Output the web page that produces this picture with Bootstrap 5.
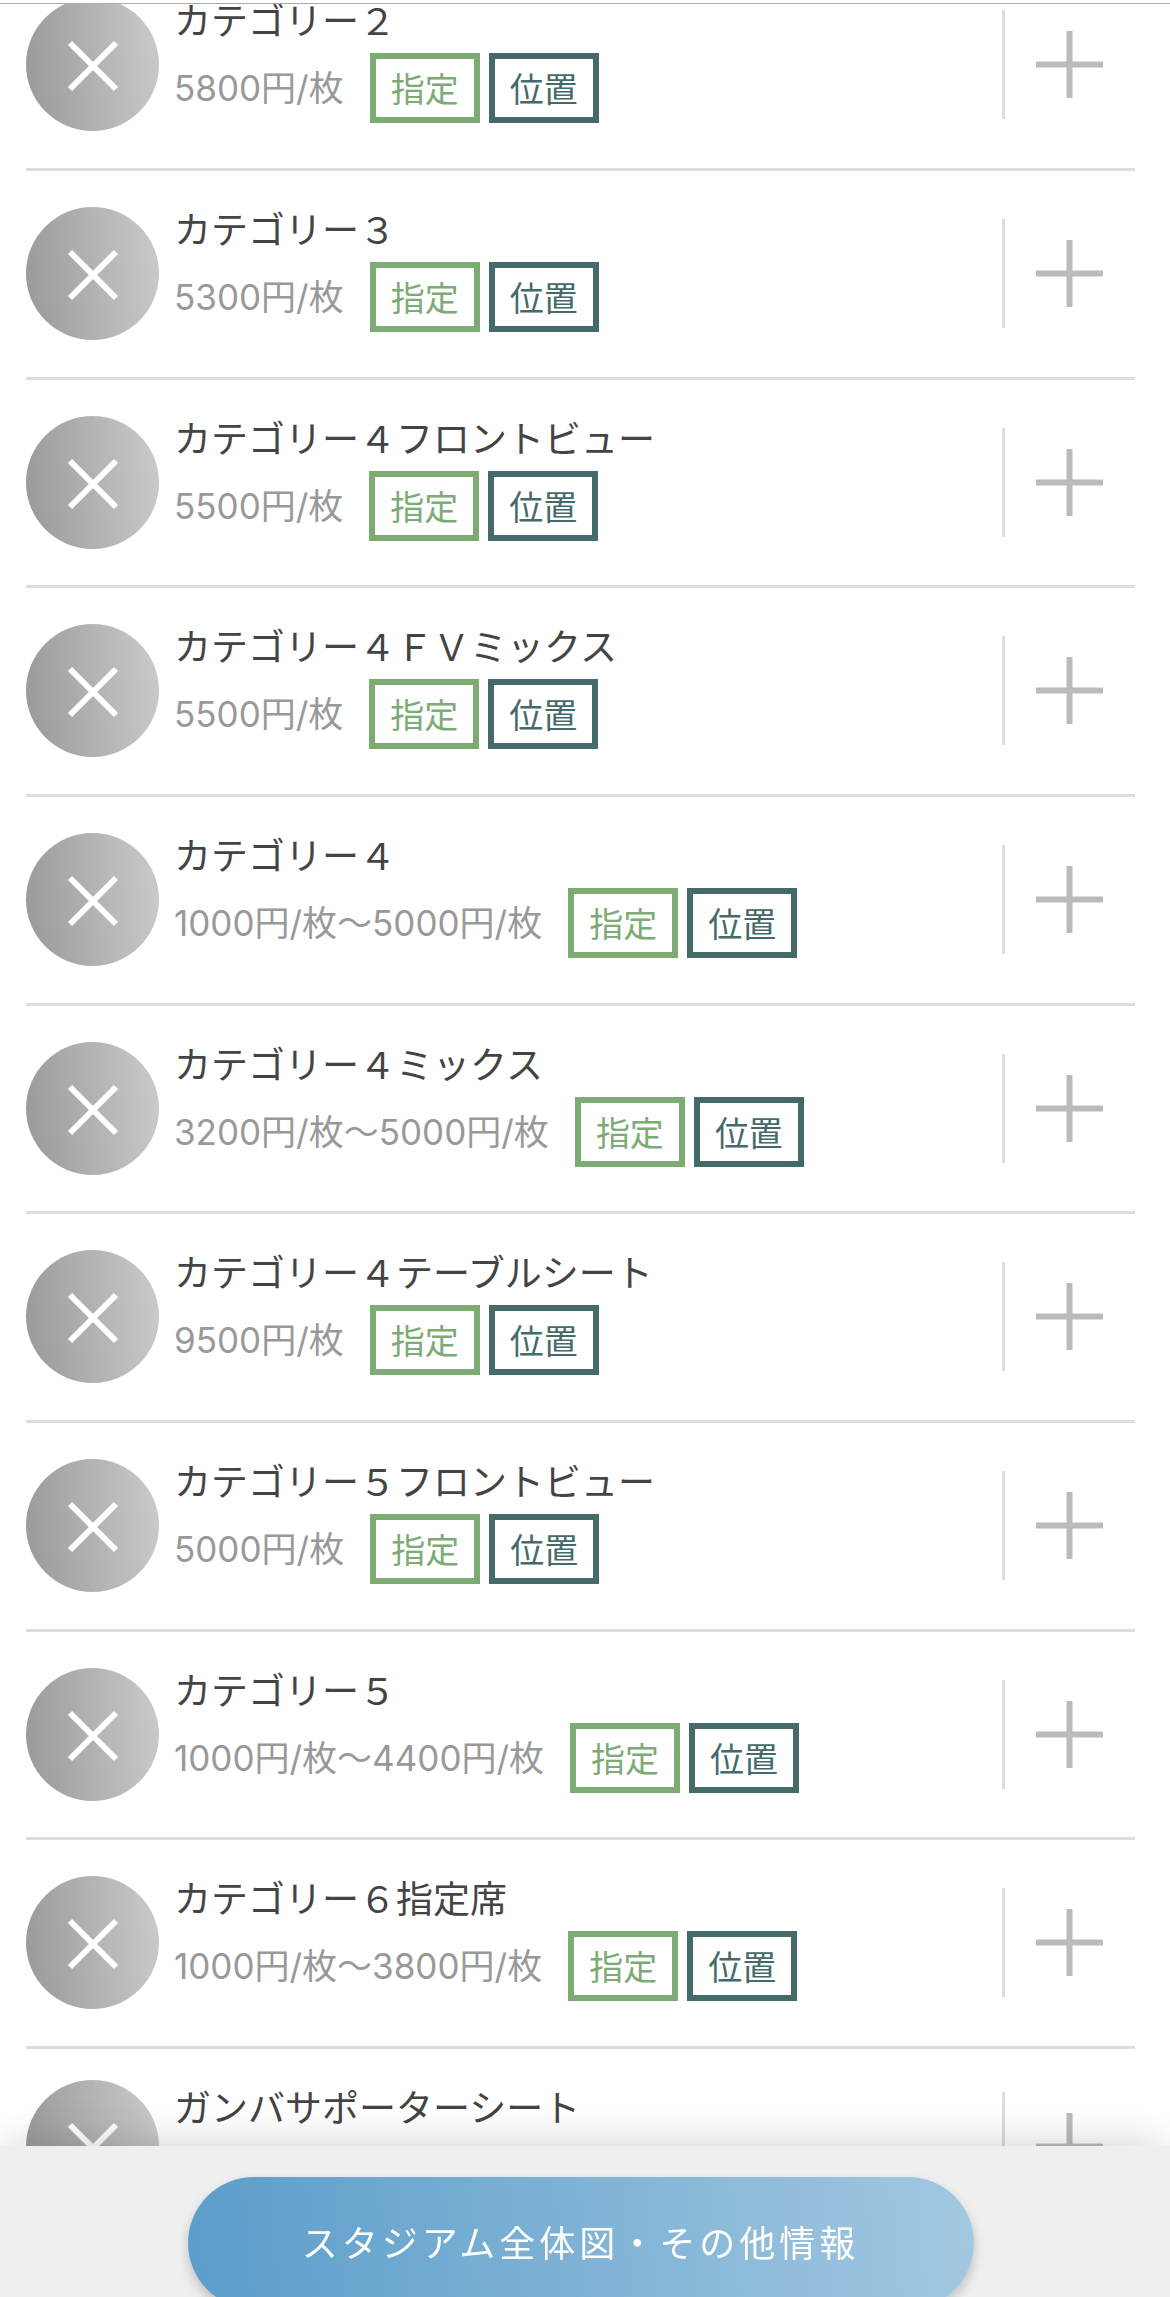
<!DOCTYPE html>
<html lang="ja">
<head>
<meta charset="utf-8">
<meta name="viewport" content="width=device-width, initial-scale=1">
<title>チケット席種一覧</title>
<link href="https://cdn.jsdelivr.net/npm/bootstrap@5.3.0/dist/css/bootstrap.min.css" rel="stylesheet">
<style>
  body { font-family: Inter, "Noto Sans CJK JP", sans-serif; color: #444; background: #fff; }
  .top-edge { height: 4px; border-bottom: 1px solid #aaa; }
  /* the list is shown part-way through its scroll */
  .seat-scroll { min-height: 0; }
  .seat-list { margin: -42px 35px 0 26px; }
  .seat-item { padding: 36px 0 37px; border-bottom: 3px solid #ddd; }
  .seat-item:nth-child(3n) { padding-bottom: 36px; }
  .seat-item:last-child { padding-top: 31px; }
  .seat-item:last-child .seat-info { padding-top: 5px; }
  .seat-status { width: 133px; height: 133px; background: linear-gradient(85deg, #999, #cbcbcb); }
  .seat-status svg { width: 56px; height: 56px; }
  .seat-info { margin-left: 15px; }
  .seat-name { font-size: 37px; line-height: 30px; font-weight: 400; margin: 6px 0 19px; font-family: "Noto Sans CJK JP", sans-serif; }
  .seat-meta { gap: 9px; height: 70px; }
  .seat-price { font-size: 35px; line-height: 44px; font-weight: 400; color: #999; margin-right: 17px; }
  .seat-tag { border: 6px solid; padding: 0 15px; font-size: 34px; line-height: 58px; font-family: "Noto Sans CJK JP", sans-serif; font-weight: 400; }
  .tag-reserved { color: #7dab74; }
  .tag-map { color: #446b6a; }
  .seat-more { width: 133px; height: 109px; border: 0; border-left: 3px solid #ddd; background: none; padding: 0 0 0 31px; text-align: left; }
  .seat-more svg { width: 67px; height: 67px; display: block; }
  .bottom-bar { height: 151px; padding: 31px 9px 0 0; background: #efefef; box-shadow: 0 -5px 44px -8px rgba(0, 0, 0, .22); overflow: hidden; }
  .info-btn { width: 786px; max-width: 90%; height: 132px; flex: none; border: 0; color: #fff; font-size: 36px; letter-spacing: 4px; line-height: 128px; padding: 0 0 4px; font-family: "Noto Sans CJK JP", sans-serif; background: linear-gradient(85deg, #5b9dca, #a3c8e1); box-shadow: 0 6px 12px rgba(0, 0, 0, .2); }
</style>
<script src="https://cdn.jsdelivr.net/npm/bootstrap@5.3.0/dist/js/bootstrap.bundle.min.js"></script>
</head>
<body>
<div class="vh-100 d-flex flex-column overflow-hidden">
  <div class="top-edge flex-shrink-0"></div>
  <main class="seat-scroll flex-grow-1 overflow-hidden">
    <ul class="seat-list list-unstyled" id="seatList"></ul>
  </main>
</div>
<footer class="bottom-bar fixed-bottom d-flex justify-content-center align-items-start">
  <button type="button" class="info-btn rounded-pill text-center text-nowrap">スタジアム全体図・その他情報</button>
</footer>
<script>
  const seats = [
    ["カテゴリー２", "5800円/枚"],
    ["カテゴリー３", "5300円/枚"],
    ["カテゴリー４フロントビュー", "5500円/枚"],
    ["カテゴリー４ＦＶミックス", "5500円/枚"],
    ["カテゴリー４", "1000円/枚〜5000円/枚"],
    ["カテゴリー４ミックス", "3200円/枚〜5000円/枚"],
    ["カテゴリー４テーブルシート", "9500円/枚"],
    ["カテゴリー５フロントビュー", "5000円/枚"],
    ["カテゴリー５", "1000円/枚〜4400円/枚"],
    ["カテゴリー６指定席", "1000円/枚〜3800円/枚"],
    ["ガンバサポーターシート", ""]
  ];
  document.getElementById("seatList").innerHTML = seats.map(([name, price]) => `
    <li class="seat-item d-flex align-items-start">
      <span class="seat-status rounded-circle flex-shrink-0 d-flex align-items-center justify-content-center">
        <svg viewBox="0 0 56 56" aria-hidden="true"><path d="M5 6L51 52M51 6L5 52" stroke="#fff" stroke-width="6" fill="none"/></svg>
      </span>
      <div class="seat-info flex-grow-1">
        <h2 class="seat-name text-nowrap">${name}</h2>
        ${price ? `<div class="seat-meta d-flex align-items-center">
          <span class="seat-price text-nowrap">${price}</span>
          <span class="seat-tag tag-reserved text-nowrap">指定</span>
          <span class="seat-tag tag-map text-nowrap">位置</span>
        </div>` : ""}
      </div>
      <button type="button" class="seat-more flex-shrink-0 align-self-center" aria-label="${name}を開く">
        <svg viewBox="0 0 67 67" aria-hidden="true"><path d="M0 33.5H67M33.5 0V67" stroke="#bbb" stroke-width="6"/></svg>
      </button>
    </li>`).join("");
</script>
</body>
</html>
